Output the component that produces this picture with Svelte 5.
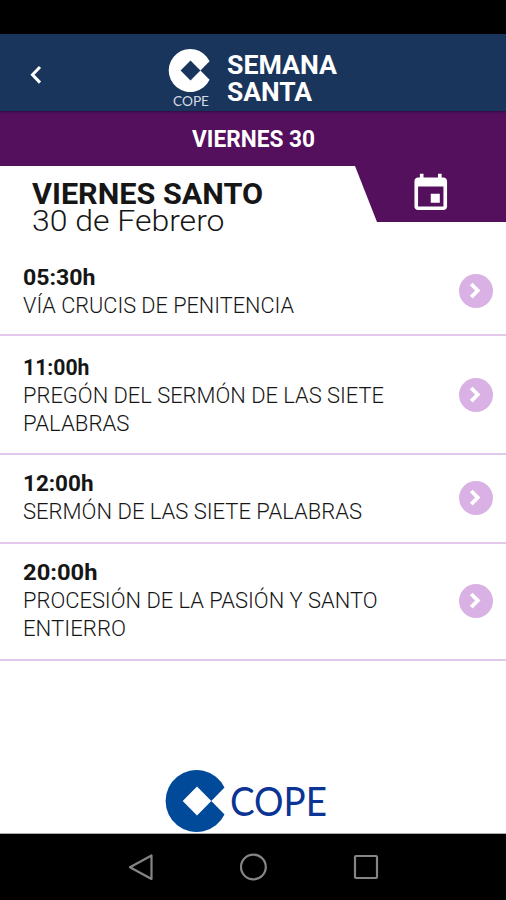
<script>
  const events = [
    { time: '05:30h', timeWidth: 72.5, height: 89, lines: [['VÍA CRUCIS DE PENITENCIA', 271]] },
    { time: '11:00h', timeWidth: 66.5, height: 119, lines: [['PREGÓN DEL SERMÓN DE LAS SIETE', 361], ['PALABRAS', 106.5]] },
    { time: '12:00h', timeWidth: 70.5, height: 89, lines: [['SERMÓN DE LAS SIETE PALABRAS', 339]] },
    { time: '20:00h', timeWidth: 74.5, height: 117, lines: [['PROCESIÓN DE LA PASIÓN Y SANTO', 354.5], ['ENTIERRO', 103]] }
  ];
</script>

{#snippet line(text, width, height, baseline, kind)}
  <svg class="line {kind}" {width} {height}>
    <text x="0" y={baseline} textLength={width} lengthAdjust="spacingAndGlyphs">{text}</text>
  </svg>
{/snippet}

{#snippet emblem(size)}
  <svg class="emblem" width={size} height={size} viewBox="0 0 62 62">
    <path fill="currentColor" fill-rule="evenodd" d="M58.5 17.5A31 31 0 1 0 58.5 44.5L45.3 31ZM31 16.5L45.3 31L31 45.5L16.7 31Z" />
  </svg>
{/snippet}

<div class="screen">
  <div class="status"></div>
  <header>
    <button class="back" aria-label="Volver">
      <svg width="14" height="20" viewBox="0 0 14 20"><path d="M12 2L4.5 9.8L12 17.6" fill="none" stroke="#fff" stroke-width="3" /></svg>
    </button>
    <div class="brand">
      {@render emblem(43)}
      {@render line('COPE', 36, 13, 11.5, 'mini')}
    </div>
    <div class="title">
      {@render line('SEMANA', 110, 27, 22, 'head')}
      {@render line('SANTA', 85, 27, 22, 'head')}
    </div>
  </header>

  <div class="day">{@render line('VIERNES 30', 123, 28, 22, 'dayname')}</div>

  <section class="date">
    <div class="dates">
      {@render line('VIERNES SANTO', 231, 28, 24, 'feast')}
      {@render line('30 de Febrero', 192.5, 28, 23, 'when')}
    </div>
    <button class="calendar" aria-label="Calendario">
      <svg width="43.5" height="43.5" viewBox="0 0 24 24"><path fill="#fff" d="M17 12h-5v5h5v-5zM16 1v2H8V1H6v2H5c-1.11 0-1.99.9-1.99 2L3 19c0 1.1.89 2 2 2h14c1.1 0 2-.9 2-2V5c0-1.1-.9-2-2-2h-1V1h-2zm3 18H5V8h14v11z" /></svg>
    </button>
  </section>

  <main>
    {#each events as event}
      <article style="height: {event.height}px">
        <div class="info">
          {@render line(event.time, event.timeWidth, 28, 22, 'time')}
          {#each event.lines as [text, width]}
            {@render line(text, width, 28, 22, 'name')}
          {/each}
        </div>
        <svg width="34" height="34" viewBox="0 0 34 34">
          <circle cx="17" cy="17" r="17" fill="#d9b1e5" />
          <path d="M12.2 10L18.8 16.6L12.2 23.2" fill="none" stroke="#fff" stroke-width="3.8" />
        </svg>
      </article>
    {/each}
  </main>

  <footer>
    {@render emblem(62)}
    {@render line('COPE', 97, 62, 46, 'wordmark')}
  </footer>

  <nav>
    <svg width="28" height="28" viewBox="0 0 28 28"><path d="M24.5 2.5V26L3 14.2Z" /></svg>
    <svg width="28" height="28" viewBox="0 0 28 28"><circle cx="14.4" cy="14" r="12.4" /></svg>
    <svg width="28" height="28" viewBox="0 0 28 28"><rect x="3" y="3" width="22" height="22" rx="1" /></svg>
  </nav>
</div>

<style>
  .screen {
    width: 506px;
    height: 900px;
    display: flex;
    flex-direction: column;
    background: #fff;
    overflow: hidden;
    font-family: Roboto, 'Liberation Sans', sans-serif;
  }
  svg {
    display: block;
    flex: none;
    overflow: visible;
  }
  button {
    border: 0;
    padding: 0;
    background: none;
  }
  .status {
    height: 34px;
    background: #000;
    flex: none;
  }
  header {
    height: 77px;
    flex: none;
    display: flex;
    background: #1a355c;
    color: #fff;
    box-shadow: 0 1px 2px rgba(20, 10, 50, 0.6);
    position: relative;
  }
  .back {
    margin: 31px 0 0 28px;
    width: 16px;
    height: 20px;
  }
  .brand {
    width: 43px;
    margin: 15px 0 0 125px;
    display: flex;
    flex-direction: column;
    align-items: center;
    gap: 2px;
  }
  .title {
    margin: 18px 0 0 14.5px;
  }
  .day {
    height: 55px;
    flex: none;
    background: #540f5d;
    display: flex;
    justify-content: center;
    padding-top: 14px;
    box-sizing: border-box;
  }
  .date {
    height: 56px;
    flex: none;
    display: flex;
    justify-content: space-between;
  }
  .dates {
    padding: 14px 0 0 31.5px;
  }
  .calendar {
    width: 151px;
    height: 56px;
    background: #540f5d;
    clip-path: polygon(0 0, 100% 0, 100% 100%, 22px 100%);
    padding: 6px 0 0 54px;
    box-sizing: border-box;
    display: flex;
  }
  main {
    margin-top: 25px;
  }
  article {
    display: flex;
    justify-content: space-between;
    align-items: center;
    box-sizing: border-box;
    border-bottom: 2px solid #e2c9eb;
    padding: 0 13px 0 23px;
  }
  article:nth-child(n + 3) {
    padding-bottom: 2px;
  }
  article:nth-child(n + 3) .info {
    margin-bottom: 1px;
  }
  footer {
    margin-top: auto;
    height: 64px;
    flex: none;
    display: flex;
    padding-left: 165.5px;
    gap: 2px;
    color: #004a99;
    border-bottom: 1px solid #aaa;
    box-sizing: border-box;
  }
  nav {
    height: 66px;
    flex: none;
    background: #000;
    display: flex;
    justify-content: center;
    align-items: center;
    gap: 84.5px;
  }
  nav svg {
    fill: none;
    stroke: #858585;
    stroke-width: 2.2;
    stroke-linejoin: round;
  }
  .line text {
    fill: #161616;
  }
  .head text {
    font-size: 26px;
    font-weight: 700;
    fill: #fff;
  }
  .mini text {
    font: 14px Lato, sans-serif;
    fill: #d5dbe5;
  }
  .dayname text {
    font-size: 23px;
    font-weight: 700;
    fill: #fff;
  }
  .feast text {
    font-size: 30px;
    font-weight: 700;
  }
  .when text {
    font-size: 29.5px;
    font-weight: 300;
  }
  .time text {
    font-size: 22px;
    font-weight: 700;
  }
  .name text {
    font-size: 22.5px;
    font-weight: 300;
  }
  .wordmark text {
    font: 40px Lato, sans-serif;
    fill: #0b3495;
  }
</style>
